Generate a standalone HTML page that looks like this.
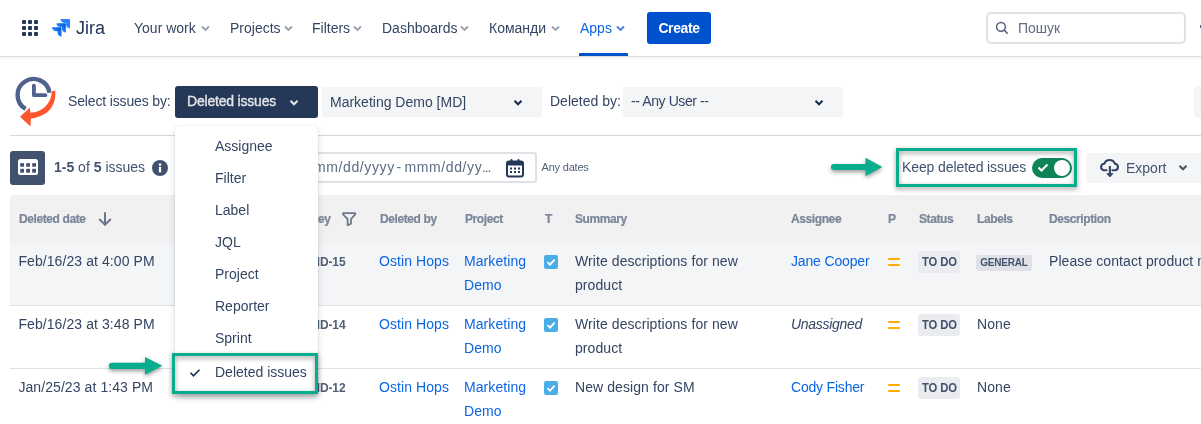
<!DOCTYPE html>
<html><head><meta charset="utf-8">
<style>
*{box-sizing:border-box;margin:0;padding:0}
html,body{width:1201px;height:424px;overflow:hidden;background:#fff;font-family:"Liberation Sans",sans-serif;color:#172B4D}
.abs{position:absolute;white-space:nowrap}
#nav{position:absolute;left:0;top:0;width:1201px;height:57px;border-bottom:1px solid #DFE1E6;box-shadow:0 1px 3px rgba(9,30,66,.08)}
.nt{font-size:14px;color:#344563;top:20px;line-height:16px}
.chev{position:absolute}
.hd{font-size:12px;font-weight:bold;color:#7A869A;-webkit-text-stroke:0.2px #7A869A;top:212px;line-height:14px}
.cell{font-size:14px;line-height:24px;color:#344563;letter-spacing:0.08px}
.lnk{color:#0C66E4}
.mi{font-size:14px;color:#344563;left:215px;line-height:16px}
</style></head><body><div id="wrap" style="position:absolute;left:0;top:0;width:1201px;height:424px;will-change:transform">
<div id="nav">
  <!-- app grid -->
  <svg class="abs" style="left:22px;top:20px" width="16" height="16" viewBox="0 0 16 16" fill="#253858">
    <rect x="0" y="0" width="4" height="4" rx="1"/><rect x="6" y="0" width="4" height="4" rx="1"/><rect x="12" y="0" width="4" height="4" rx="1"/>
    <rect x="0" y="6" width="4" height="4" rx="1"/><rect x="6" y="6" width="4" height="4" rx="1"/><rect x="12" y="6" width="4" height="4" rx="1"/>
    <rect x="0" y="12" width="4" height="4" rx="1"/><rect x="6" y="12" width="4" height="4" rx="1"/><rect x="12" y="12" width="4" height="4" rx="1"/>
  </svg>
  <!-- jira logo -->
  <svg class="abs" style="left:52px;top:18.5px" width="18" height="18.5" viewBox="0 0 16.5 16.9">
    <defs><linearGradient id="g1" x1="1" y1="0" x2="0.4" y2="0.6"><stop offset="0" stop-color="#0052CC"/><stop offset="1" stop-color="#2684FF"/></linearGradient></defs>
    <path fill="#2684FF" d="M15.7 0H7.8c0 2 1.6 3.6 3.6 3.6h1.5v1.4c0 2 1.6 3.6 3.6 3.6V.8c0-.5-.4-.8-.8-.8z"/>
    <path fill="url(#g1)" d="M11.9 3.8H4c0 2 1.6 3.6 3.6 3.6h1.5v1.4c0 2 1.6 3.6 3.6 3.6V4.6c0-.5-.3-.8-.8-.8z"/>
    <path fill="url(#g1)" d="M8 7.6H0c0 2 1.6 3.6 3.6 3.6h1.5v1.4c0 2 1.6 3.6 3.6 3.6V8.4c0-.4-.3-.8-.7-.8z"/>
  </svg>
  <div class="abs" style="left:76px;top:18px;font-size:18px;color:#253858;line-height:21px">Jira</div>
  <div class="abs nt" style="left:134px">Your work</div>
  <div class="abs nt" style="left:230px">Projects</div>
  <div class="abs nt" style="left:312px">Filters</div>
  <div class="abs nt" style="left:382px">Dashboards</div>
  <div class="abs nt" style="left:489px">Команди</div>
  <div class="abs nt" style="left:580px;color:#0C66E4">Apps</div>
  <div class="abs" style="left:579px;top:53px;width:49px;height:3px;background:#0052CC;border-radius:1px 1px 0 0"></div>
  <div class="abs" style="left:647px;top:12px;width:64px;height:32px;background:#0052CC;border-radius:3px;color:#fff;font-size:14px;font-weight:bold;line-height:32px;text-align:center;letter-spacing:-0.4px">Create</div>
  <div class="abs" style="left:986px;top:12px;width:200px;height:32px;border:2px solid #DFE1E6;border-radius:5px"></div>
  <svg class="abs" style="left:994px;top:21px" width="14" height="14" viewBox="0 0 14 14"><circle cx="7" cy="5.8" r="4.4" fill="none" stroke="#505F79" stroke-width="1.5"/><path d="M10.2 9l3 3.2" stroke="#505F79" stroke-width="1.6" stroke-linecap="round"/></svg>
  <div class="abs" style="left:1018px;top:20px;font-size:14px;color:#5E6C84;line-height:16px">Пошук</div>
<svg class="abs" style="left:201px;top:24px" width="9" height="8" viewBox="0 0 9 8"><path d="M1 2.5L4.5 6L8 2.5" fill="none" stroke="#97A0AF" stroke-width="1.9"/></svg>
<svg class="abs" style="left:284px;top:24px" width="9" height="8" viewBox="0 0 9 8"><path d="M1 2.5L4.5 6L8 2.5" fill="none" stroke="#97A0AF" stroke-width="1.9"/></svg>
<svg class="abs" style="left:353px;top:24px" width="9" height="8" viewBox="0 0 9 8"><path d="M1 2.5L4.5 6L8 2.5" fill="none" stroke="#97A0AF" stroke-width="1.9"/></svg>
<svg class="abs" style="left:460px;top:24px" width="9" height="8" viewBox="0 0 9 8"><path d="M1 2.5L4.5 6L8 2.5" fill="none" stroke="#97A0AF" stroke-width="1.9"/></svg>
<svg class="abs" style="left:551px;top:24px" width="9" height="8" viewBox="0 0 9 8"><path d="M1 2.5L4.5 6L8 2.5" fill="none" stroke="#97A0AF" stroke-width="1.9"/></svg>
<svg class="abs" style="left:616px;top:24px" width="9" height="8" viewBox="0 0 9 8"><path d="M1 2.5L4.5 6L8 2.5" fill="none" stroke="#4C7FE0" stroke-width="1.9"/></svg>
<div class="abs" style="left:1199.5px;top:25px;width:1.5px;height:2.5px;background:#42526E;border-radius:1px"></div>
</div>


<!-- filter row -->
<svg class="abs" style="left:10px;top:72px" width="50" height="60" viewBox="10 72 50 60">
  <path d="M25.6 108.86 A16 16 0 1 1 49.44 92.77" fill="none" stroke="#50618D" stroke-width="4.4"/>
  <path d="M33.9 85.6 V95.2 H45.4" fill="none" stroke="#50618D" stroke-width="3.8" stroke-linecap="round" stroke-linejoin="round"/>
  <path d="M51.8 91.4 L55.2 90.6 C56.2 100 53 108.5 45.8 113.2 C41 116.2 36 118 30.9 118.4 L30.5 126.6 L20 116.8 L29.9 107.6 L30.3 112.8 C35.5 112.6 41 110.5 45 107 C49.5 102.5 51.6 97 51.8 91.4 Z" fill="#FF5630"/>
</svg>
<div class="abs" style="left:68px;top:93px;font-size:14px;color:#344563;line-height:16px;letter-spacing:-0.15px">Select issues by:</div>
<div class="abs" style="left:175px;top:86px;width:143px;height:32px;background:#253858;border-radius:3px"></div>
<div class="abs" style="left:187px;top:93px;font-size:14px;color:#E4E6EA;line-height:16px;-webkit-text-stroke:0.35px #E4E6EA;letter-spacing:-0.2px">Deleted issues</div>
<svg class="abs" style="left:289px;top:98.8px" width="10" height="8" viewBox="0 0 10 8"><path d="M1.5 1.8L5 5.3L8.5 1.8" fill="none" stroke="#E4E6EA" stroke-width="2"/></svg>
<div class="abs" style="left:322px;top:87px;width:220px;height:30px;background:#F4F5F7;border-radius:3px"></div>
<div class="abs" style="left:330px;top:93.5px;font-size:14px;color:#344563;line-height:16px">Marketing Demo [MD]</div>
<svg class="abs" style="left:513px;top:98.8px" width="10" height="8" viewBox="0 0 10 8"><path d="M1.5 1.8L5 5.3L8.5 1.8" fill="none" stroke="#172B4D" stroke-width="2"/></svg>
<div class="abs" style="left:550px;top:93px;font-size:14px;color:#344563;line-height:16px">Deleted by:</div>
<div class="abs" style="left:623px;top:87px;width:220px;height:30px;background:#F4F5F7;border-radius:3px"></div>
<div class="abs" style="left:631px;top:93px;font-size:14px;color:#344563;line-height:16px;letter-spacing:-0.4px">-- Any User --</div>
<svg class="abs" style="left:814px;top:98.8px" width="10" height="8" viewBox="0 0 10 8"><path d="M1.5 1.8L5 5.3L8.5 1.8" fill="none" stroke="#172B4D" stroke-width="2"/></svg>
<div class="abs" style="left:1194px;top:86px;width:20px;height:32px;background:#F4F5F7;border-radius:4px"></div>
<div class="abs" style="left:10px;top:135px;width:1191px;height:1px;background:#D5D8DD"></div>

<!-- toolbar -->
<div class="abs" style="left:10px;top:151px;width:35px;height:34px;background:#42526E;border-radius:3px"></div>
<svg class="abs" style="left:18px;top:159px" width="20" height="16" viewBox="0 0 20 16">
  <rect x="0" y="0" width="20" height="16" rx="2.5" fill="#fff"/>
  <g fill="#42526E"><rect x="2.2" y="4.2" width="3.8" height="3.5"/><rect x="8.2" y="4.2" width="3.8" height="3.5"/><rect x="14.2" y="4.2" width="3.8" height="3.5"/>
  <rect x="2.2" y="9.8" width="3.8" height="3.9"/><rect x="8.2" y="9.8" width="3.8" height="3.9"/><rect x="14.2" y="9.8" width="3.8" height="3.9"/></g>
</svg>
<div class="abs" style="left:54px;top:159px;font-size:14px;color:#42526E;line-height:16px"><b>1-5</b> of <b>5</b> issues</div>
<svg class="abs" style="left:152px;top:160px" width="16" height="16" viewBox="0 0 16 16"><circle cx="8" cy="8" r="8" fill="#42526E"/><circle cx="8" cy="4.6" r="1.3" fill="#fff"/><rect x="6.9" y="6.8" width="2.2" height="5.6" rx="0.6" fill="#fff"/></svg>
<div class="abs" style="left:250px;top:152px;width:287px;height:31px;border:2px solid #DFE1E6;border-radius:3px"></div>
<div class="abs" style="left:301.8px;top:159px;font-size:14px;color:#5E6C84;line-height:16px;letter-spacing:0.6px">mmm/dd/yyyy</div>
<div class="abs" style="left:396.6px;top:159px;font-size:14px;color:#5E6C84;line-height:16px">-</div>
<div class="abs" style="left:404.5px;top:159px;font-size:14px;color:#5E6C84;line-height:16px;letter-spacing:0.6px">mmm/dd/yy</div>
<div class="abs" style="left:482px;top:159px;font-size:14px;color:#5E6C84;line-height:16px;letter-spacing:-1.2px">...</div>
<svg class="abs" style="left:505px;top:157.5px" width="20" height="20" viewBox="0 0 20 20">
  <rect x="2" y="3.5" width="16" height="15" rx="2" fill="none" stroke="#253858" stroke-width="2"/>
  <rect x="2" y="3.5" width="16" height="4" fill="#253858"/>
  <rect x="5.5" y="1" width="2" height="4" rx="1" fill="#253858"/><rect x="12.5" y="1" width="2" height="4" rx="1" fill="#253858"/>
  <g fill="#253858"><rect x="5" y="9.5" width="2" height="2"/><rect x="9" y="9.5" width="2" height="2"/><rect x="13" y="9.5" width="2" height="2"/><rect x="5" y="13" width="2" height="2"/><rect x="9" y="13" width="2" height="2"/><rect x="13" y="13" width="2" height="2"/></g>
</svg>
<div class="abs" style="left:541.5px;top:161px;font-size:11px;color:#505F79;line-height:13px;letter-spacing:-0.2px">Any dates</div>

<div class="abs" style="left:902px;top:159px;font-size:14px;color:#42526E;line-height:16px;letter-spacing:-0.1px">Keep deleted issues</div>
<div class="abs" style="left:1032px;top:158px;width:40px;height:20px;background:#0E8358;border-radius:10px"></div>
<div class="abs" style="left:1054px;top:160px;width:16px;height:16px;background:#fff;border-radius:50%"></div>
<svg class="abs" style="left:1037px;top:162px" width="12" height="11" viewBox="0 0 12 11"><path d="M1.5 5.5L4.5 8.5L10.5 2.5" fill="none" stroke="#fff" stroke-width="2"/></svg>

<div class="abs" style="left:1086px;top:153px;width:130px;height:30px;background:#F4F5F7;border-radius:3px"></div>
<svg class="abs" style="left:1099px;top:157px" width="22" height="21" viewBox="0 0 22 21">
  <path d="M7.6 13.2 H4.6 A3.3 3.3 0 0 1 5.34 6.7 A5.6 5.6 0 0 1 15.86 6.7 A3.3 3.3 0 0 1 16.4 13.2 H13.4" fill="none" stroke="#344563" stroke-width="2.1" stroke-linecap="round" stroke-linejoin="round"/>
  <path d="M10.9 9 V17.5" stroke="#344563" stroke-width="2.1"/>
  <path d="M7.9 16.6 H13.9 L10.9 20 Z" fill="#344563" stroke="#344563" stroke-width="0.8" stroke-linejoin="round"/>
</svg>
<div class="abs" style="left:1126px;top:160px;font-size:14px;color:#42526E;line-height:16px">Export</div>
<svg class="abs" style="left:1178px;top:164px" width="10" height="8" viewBox="0 0 10 8"><path d="M1.5 1.8L5 5.3L8.5 1.8" fill="none" stroke="#42526E" stroke-width="2"/></svg>

<!-- table header -->
<div class="abs" style="left:10px;top:195px;width:1200px;height:48px;background:#F1F1F1;border-radius:4px 0 0 0"></div>
<div class="abs hd" style="left:19px;letter-spacing:-0.4px">Deleted date</div>
<svg class="abs" style="left:98px;top:212px" width="14" height="14" viewBox="0 0 14 14"><path d="M7 0.3V12.8 M1.2 7L7 12.8L12.8 7" fill="none" stroke="#6B778C" stroke-width="2"/></svg>
<div class="abs hd" style="left:280px;letter-spacing:-0.4px">Issue key</div>
<svg class="abs" style="left:341px;top:211px" width="16" height="15" viewBox="0 0 16 15"><path d="M2 2.2H14.2V3.4L10 8V12.6L6.6 14.3V8L2 3.4Z" fill="none" stroke="#6B778C" stroke-width="1.8" stroke-linejoin="round"/></svg>
<div class="abs hd" style="left:380px;letter-spacing:-0.4px">Deleted by</div>
<div class="abs hd" style="left:465px;letter-spacing:-0.4px">Project</div>
<div class="abs hd" style="left:545px;letter-spacing:-0.4px">T</div>
<div class="abs hd" style="left:575px;letter-spacing:-0.4px">Summary</div>
<div class="abs hd" style="left:791px;letter-spacing:-0.4px">Assignee</div>
<div class="abs hd" style="left:888px;letter-spacing:-0.4px">P</div>
<div class="abs hd" style="left:919px;letter-spacing:-0.4px">Status</div>
<div class="abs hd" style="left:977px;letter-spacing:-0.4px">Labels</div>
<div class="abs hd" style="left:1049px;letter-spacing:-0.4px">Description</div>
<div class="abs" style="left:10px;top:243px;width:1191px;height:63px;background:#F4F5F7;border-bottom:1px solid #DFE1E6"></div>
<div class="abs cell" style="left:18.4px;top:249px">Feb/16/23 at 4:00 PM</div>
<div class="abs" style="left:310px;top:255px;font-size:12px;font-weight:bold;color:#505F79;line-height:14px;letter-spacing:-0.1px">MD-15</div>
<div class="abs cell lnk" style="left:379px;top:249px">Ostin Hops</div>
<div class="abs cell lnk" style="left:464px;top:249px;white-space:normal;width:70px">Marketing<br>Demo</div>
<svg class="abs" style="left:544px;top:255px" width="14" height="14" viewBox="0 0 14 14"><rect width="14" height="14" rx="2" fill="#4BADE8"/><path d="M3.5 7.2L6 9.6L10.6 4.6" fill="none" stroke="#fff" stroke-width="1.8"/></svg>
<div class="abs cell" style="left:575px;top:249px">Write descriptions for new<br>product</div>
<div class="abs cell lnk" style="left:791px;top:249px;letter-spacing:-0.15px">Jane Cooper</div>
<div class="abs" style="left:888px;top:258px;width:12px;height:2px;background:#FFAB00;border-radius:1px"></div><div class="abs" style="left:888px;top:264px;width:12px;height:2px;background:#FFAB00;border-radius:1px"></div>
<div class="abs" style="left:918px;top:251px;width:42px;height:22px;background:#EBECF0;border-radius:3px;font-size:12.5px;font-weight:bold;color:#42526E;line-height:22px;text-align:center"><span style="display:inline-block;transform:scaleX(.9);letter-spacing:-0.1px">TO DO</span></div>
<div class="abs" style="left:976px;top:255px;width:56px;height:16px;background:#DFE1E6;border-radius:3px;font-size:10px;font-weight:bold;color:#42526E;line-height:16px;text-align:center;letter-spacing:-0.2px">GENERAL</div>
<div class="abs cell" style="left:1049px;top:249px">Please contact product manager</div>
<div class="abs" style="left:10px;top:306px;width:1191px;height:63px;background:#FFFFFF;border-bottom:1px solid #DFE1E6"></div>
<div class="abs cell" style="left:18.4px;top:312px">Feb/16/23 at 3:48 PM</div>
<div class="abs" style="left:310px;top:318px;font-size:12px;font-weight:bold;color:#505F79;line-height:14px;letter-spacing:-0.1px">MD-14</div>
<div class="abs cell lnk" style="left:379px;top:312px">Ostin Hops</div>
<div class="abs cell lnk" style="left:464px;top:312px;white-space:normal;width:70px">Marketing<br>Demo</div>
<svg class="abs" style="left:544px;top:318px" width="14" height="14" viewBox="0 0 14 14"><rect width="14" height="14" rx="2" fill="#4BADE8"/><path d="M3.5 7.2L6 9.6L10.6 4.6" fill="none" stroke="#fff" stroke-width="1.8"/></svg>
<div class="abs cell" style="left:575px;top:312px">Write descriptions for new<br>product</div>
<div class="abs cell" style="left:791px;top:312px;font-style:italic;letter-spacing:-0.3px">Unassigned</div>
<div class="abs" style="left:888px;top:321px;width:12px;height:2px;background:#FFAB00;border-radius:1px"></div><div class="abs" style="left:888px;top:327px;width:12px;height:2px;background:#FFAB00;border-radius:1px"></div>
<div class="abs" style="left:918px;top:314px;width:42px;height:22px;background:#EBECF0;border-radius:3px;font-size:12.5px;font-weight:bold;color:#42526E;line-height:22px;text-align:center"><span style="display:inline-block;transform:scaleX(.9);letter-spacing:-0.1px">TO DO</span></div>
<div class="abs cell" style="left:977px;top:312px">None</div>
<div class="abs" style="left:10px;top:369px;width:1191px;height:63px;background:#FFFFFF;border-bottom:1px solid #DFE1E6"></div>
<div class="abs cell" style="left:18.4px;top:375px">Jan/25/23 at 1:43 PM</div>
<div class="abs" style="left:310px;top:381px;font-size:12px;font-weight:bold;color:#505F79;line-height:14px;letter-spacing:-0.1px">MD-12</div>
<div class="abs cell lnk" style="left:379px;top:375px">Ostin Hops</div>
<div class="abs cell lnk" style="left:464px;top:375px;white-space:normal;width:70px">Marketing<br>Demo</div>
<svg class="abs" style="left:544px;top:381px" width="14" height="14" viewBox="0 0 14 14"><rect width="14" height="14" rx="2" fill="#4BADE8"/><path d="M3.5 7.2L6 9.6L10.6 4.6" fill="none" stroke="#fff" stroke-width="1.8"/></svg>
<div class="abs cell" style="left:575px;top:375px">New design for SM</div>
<div class="abs cell lnk" style="left:791px;top:375px;letter-spacing:-0.2px">Cody Fisher</div>
<div class="abs" style="left:888px;top:384px;width:12px;height:2px;background:#FFAB00;border-radius:1px"></div><div class="abs" style="left:888px;top:390px;width:12px;height:2px;background:#FFAB00;border-radius:1px"></div>
<div class="abs" style="left:918px;top:377px;width:42px;height:22px;background:#EBECF0;border-radius:3px;font-size:12.5px;font-weight:bold;color:#42526E;line-height:22px;text-align:center"><span style="display:inline-block;transform:scaleX(.9);letter-spacing:-0.1px">TO DO</span></div>
<div class="abs cell" style="left:977px;top:375px">None</div>

<!-- dropdown menu -->
<div class="abs" style="left:175px;top:126px;width:143px;height:268px;background:#fff;border-radius:4px;box-shadow:0 0 1px rgba(9,30,66,.31),0 4px 8px -2px rgba(9,30,66,.25)"></div>
<div class="abs mi" style="top:138px">Assignee</div>
<div class="abs mi" style="top:170px">Filter</div>
<div class="abs mi" style="top:202px">Label</div>
<div class="abs mi" style="top:234px">JQL</div>
<div class="abs mi" style="top:266px">Project</div>
<div class="abs mi" style="top:298px">Reporter</div>
<div class="abs mi" style="top:330px">Sprint</div>
<div class="abs mi" style="top:364px">Deleted issues</div>
<svg class="abs" style="left:189px;top:367px" width="12" height="11" viewBox="0 0 12 11"><path d="M1.5 5.8L4.5 8.8L10.5 2.8" fill="none" stroke="#172B4D" stroke-width="1.6"/></svg>

<!-- annotations -->
<div class="abs" style="left:172px;top:353px;width:146px;height:41px;border:3.5px solid #08AD8E;filter:drop-shadow(0.3px 2px 2.5px rgba(0,0,0,.42))"></div>
<div class="abs" style="left:896px;top:148px;width:181px;height:39px;border:3.5px solid #08AD8E;filter:drop-shadow(0.3px 2px 2.5px rgba(0,0,0,.42))"></div>
<svg class="abs" style="left:104px;top:352px" width="64" height="30" viewBox="104 352 64 30"><path d="M112 362.8 H145 V357 L162.4 365.8 L145 374.8 V369 H112 A3.1 3.1 0 0 1 112 362.8Z" fill="#08AD8E" style="filter:drop-shadow(0.5px 2.5px 2px rgba(0,0,0,.4))"/></svg>
<svg class="abs" style="left:826px;top:154px" width="64" height="30" viewBox="826 154 64 30"><path d="M834 163.9 H865.5 V157.8 L882.4 167 L865.5 176 V170 H834 A3.05 3.05 0 0 1 834 163.9Z" fill="#08AD8E" style="filter:drop-shadow(0.5px 2.5px 2px rgba(0,0,0,.4))"/></svg>
</div></body></html>
